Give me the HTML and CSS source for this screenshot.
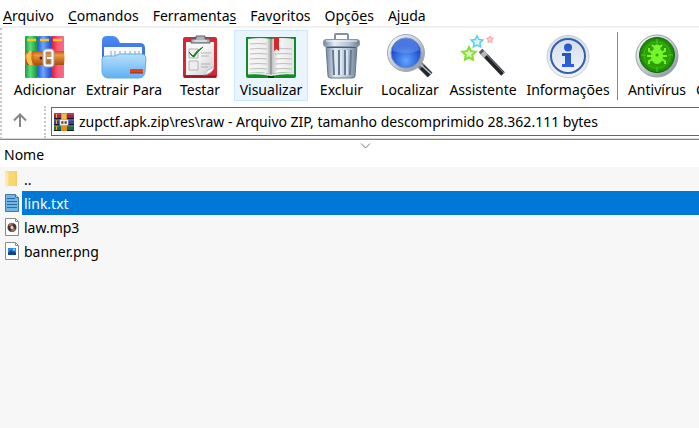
FILE: index.html
```html
<!DOCTYPE html>
<html lang="pt-BR">
<head>
<meta charset="utf-8">
<title>zupctf.apk.zip</title>
<link rel="stylesheet" href="styles.css">
</head>
<body>
<svg class="defs" aria-hidden="true">
  <defs>
    <linearGradient id="green"><stop offset="0" stop-color="#169a3e"/><stop offset=".4" stop-color="#5fdc7c"/><stop offset="1" stop-color="#0d8a33"/></linearGradient>
    <linearGradient id="blue"><stop offset="0" stop-color="#2460d8"/><stop offset=".4" stop-color="#6fa4ff"/><stop offset="1" stop-color="#1a4fd0"/></linearGradient>
    <linearGradient id="red"><stop offset="0" stop-color="#d3143c"/><stop offset=".5" stop-color="#ff5873"/><stop offset="1" stop-color="#ef6f92"/></linearGradient>
    <linearGradient id="belt" x2="0" y2="1"><stop offset="0" stop-color="#b85a10"/><stop offset=".3" stop-color="#f0983a"/><stop offset="1" stop-color="#a84c0c"/></linearGradient>
    <linearGradient id="folderBack" x2="0" y2="1"><stop offset="0" stop-color="#4c8cf5"/><stop offset="1" stop-color="#2f62d8"/></linearGradient>
    <linearGradient id="folderFront" x2="0" y2="1"><stop offset="0" stop-color="#b9e0fb"/><stop offset="1" stop-color="#5fb0f3"/></linearGradient>
    <linearGradient id="steel"><stop offset="0" stop-color="#71869d"/><stop offset=".3" stop-color="#e3ebf3"/><stop offset=".7" stop-color="#b3c2d2"/><stop offset="1" stop-color="#6b7f96"/></linearGradient>
    <linearGradient id="ring" x2="1" y2="1"><stop offset="0" stop-color="#fff"/><stop offset=".5" stop-color="#c4cad2"/><stop offset="1" stop-color="#848b95"/></linearGradient>
    <radialGradient id="lens" cy=".75"><stop offset="0" stop-color="#62a6ff"/><stop offset="1" stop-color="#2052d0"/></radialGradient>
    <linearGradient id="page"><stop offset="0" stop-color="#f8f8f8"/><stop offset=".8" stop-color="#eee"/><stop offset="1" stop-color="#a9a9a9"/></linearGradient>
    <linearGradient id="page2"><stop offset="0" stop-color="#b9b9b9"/><stop offset=".3" stop-color="#f8f8f8"/><stop offset="1" stop-color="#e4e4e4"/></linearGradient>
    <linearGradient id="paper" x2="1" y2="1"><stop offset=".4" stop-color="#f8f8f8"/><stop offset="1" stop-color="#c9cccf"/></linearGradient>
    <linearGradient id="infoFace" x2="0" y2="1"><stop offset="0" stop-color="#d5dde7"/><stop offset="1" stop-color="#f1f4f8"/></linearGradient>
    <linearGradient id="infoMark" x2="0" y2="1"><stop offset="0" stop-color="#2a56b8"/><stop offset="1" stop-color="#2b60ee"/></linearGradient>
    <radialGradient id="radar"><stop offset="0" stop-color="#2fa800"/><stop offset=".8" stop-color="#2a9c06"/><stop offset="1" stop-color="#157d08"/></radialGradient>
    <linearGradient id="yellow"><stop offset="0" stop-color="#fde49a"/><stop offset="1" stop-color="#f6cf62"/></linearGradient>
  </defs>
</svg>

<nav class="menu" aria-label="Menu">
  <a href="#"><u>A</u>rquivo</a>
  <a href="#"><u>C</u>omandos</a>
  <a href="#">Ferramenta<u>s</u></a>
  <a href="#">Fav<u>o</u>ritos</a>
  <a href="#">Opçõ<u>e</u>s</a>
  <a href="#">Aj<u>u</u>da</a>
</nav>

<div class="bars">
<div class="toolbar" role="toolbar">
  <button type="button">
    <svg viewBox="0 0 48 48">
      <rect x="4" y="3" width="13" height="42" rx="1" fill="url(#green)"/><rect x="17" y="3" width="13" height="42" rx="1" fill="url(#blue)"/><rect x="30" y="3" width="13" height="42" rx="1" fill="url(#red)"/>
      <path d="M6 7h9M19 7h9M32 7h9" stroke="#f6c91c" stroke-width="2.500"/>
      <path d="M6 18h37q1 7 0 14H6q-4-7 0-14z" fill="url(#belt)"/>
      <path d="M11 18H8q-5 7 0 14h5q-5-7-2-14z" fill="#f8c04c"/><path d="M12 18v14" stroke="#b8690d"/>
      <circle cx="20" cy="25" r="1.500" fill="#402000"/>
      <rect x="23.500" y="17.500" width="8" height="15" rx="2" fill="none" stroke="#9aa0a8" stroke-width="4"/><rect x="23.500" y="17.500" width="8" height="15" rx="2" fill="none" stroke="#fafafa" stroke-width="2"/>
      <path d="M26 25h6" stroke="#fff" stroke-width="2"/>
    </svg>
    <span>Adicionar</span>
  </button>
  <button type="button">
    <svg viewBox="0 0 48 48">
      <path d="M2 8q0-5 5-5h6q3 0 5 3l2 4h20q5 0 5 5v14H2z" fill="url(#folderBack)"/>
      <path d="M4 14h38v17H4z" fill="#f8fafc"/><path d="M11 18v5M15 18v5M20 18v5M25 18v5M30 18v5M35 18v5M39 18v5" stroke="#b5bdc8" stroke-width="1.500"/>
      <path d="M2 26q0-3 4-3h9l4-2h22q5 0 5 5l-1 13q-1 6-6 6H8q-5 0-6-6z" fill="url(#folderFront)" stroke="#62adf0"/>
      <rect x="30" y="36" width="13" height="4" rx="1" fill="#e4411f"/><path d="M30 40h13" stroke="#a8240e"/>
    </svg>
    <span>Extrair Para</span>
  </button>
  <button type="button">
    <svg viewBox="0 0 48 48">
      <path d="M9 4h30q2 0 2 2v37q0 2-2 2H9q-2 0-2-2V6q0-2 2-2z" fill="#d82732"/><path d="M8 43.500h32" stroke="#9c1620" stroke-width="2"/>
      <path d="M10 9h28v24q-1 8-9 9H10z" fill="url(#paper)"/><path d="M28 42q3-6 10-8-1 6-10 8z" fill="#fff" stroke="#b5b8ba"/>
      <path d="M15 8V6h5V3h9v3h5v4H15z" fill="#aeb5bd" stroke="#59626c"/><path d="M18 8h13" stroke="#fff"/>
      <path d="M13 16h9v9h-9zM13 28h9v9h-9z" fill="#eee" stroke="#b4b4b4"/><path d="M25 20h10M25 23h8M25 31h9M25 34h7" stroke="#b1b1b1"/>
      <path d="M13 19l4 4q4-6 10-9-6 5-9 10-2 0-5-5z" fill="#168326" stroke="#168326"/>
    </svg>
    <span>Testar</span>
  </button>
  <button type="button" class="hot">
    <svg class="wide" viewBox="0 0 56 48">
      <path d="M3 4h50v39q0 2-2 2H5q-2 0-2-2z" fill="#128a27"/><path d="M25 42h6v3h-6z" fill="#063d0c"/>
      <path d="M5 6q13-2 23 0v35q-12-3-23-1z" fill="url(#page)"/><path d="M28 6q12-2 23 0v34q-12-2-23 1z" fill="url(#page2)"/>
      <path d="M5 40.500q12-1 23 1.500 12-2.500 23-1.500" fill="none" stroke="#e4e8e6" stroke-width="2"/>
      <path d="M28 6v36" stroke="#808080"/>
      <path d="M7 11q9-1 17 0M7 16q9-1 17 0M7 21q9-1 17 0M7 26q9-1 17 0M7 31q9-1 17 0M7 36q9-1 17 0M32 16q9-1 17 0M32 21q9-1 17 0M32 26q9-1 17 0M32 31q9-1 17 0M32 36q9-1 17 0" fill="none" stroke="#bcbcbc"/>
      <path d="M31 4h5v14l-2.500-2-2.500 2z" fill="#d9262a"/>
    </svg>
    <span>Visualizar</span>
  </button>
  <button type="button">
    <svg viewBox="0 0 48 48">
      <path d="M17 8V2q0-1 1-1h11q1 0 1 1v6" fill="none" stroke="#8191a4" stroke-width="2"/>
      <path d="M8 13h31l-2 30q0 2-3 2H13q-3 0-3-2z" fill="url(#steel)" stroke="#65788d"/>
      <path d="M15 17l1 25M21 17v25M27 17v25M33 17l-1 25" stroke="#667b93" stroke-width="2"/><path d="M17 17l1 25M23 17v25M29 17v25" stroke="#e4edf5" stroke-width="1.500"/>
      <rect x="5.500" y="6.500" width="36" height="7" rx="2.500" fill="url(#steel)" stroke="#8799ad"/><path d="M8 8h31" stroke="#f3f7fb"/><path d="M9 14.500h29" stroke="#4a5c73"/>
    </svg>
    <span>Excluir</span>
  </button>
  <button type="button">
    <svg viewBox="0 0 48 48">
      <path d="M33 31l11 11" stroke="#777d86" stroke-width="7"/><path d="M36 34l8 8" stroke="#22252b" stroke-width="6"/><path d="M34 31l11 10" stroke="#bfc5ce" stroke-width="1.500"/>
      <circle cx="20" cy="20" r="18.500" fill="url(#ring)" stroke="#a2a9b3"/><circle cx="20" cy="20" r="15" fill="url(#lens)" stroke="#7b8fb8"/>
      <path d="M7 18a13 13 0 0 1 26-1q-10 6-26 1z" fill="#6f9df0" opacity=".5"/>
    </svg>
    <span>Localizar</span>
  </button>
  <button type="button">
    <svg viewBox="0 0 48 48">
      <path d="M23 19l21 22" stroke="#222427" stroke-width="5"/><path d="M25 19l20 21" stroke="#8b9097"/><path d="M22 18l5 5" stroke="#b5babf" stroke-width="5"/><path d="M21.500 17.500l2 2" stroke="#55595d" stroke-width="5"/>
      <path id="star" d="M10 14l2 4.200 4.700.6-3.400 3.200.8 4.700-4.100-2.200-4.100 2.200.8-4.700-3.400-3.200 4.700-.6z" fill="#d5f8a8" stroke="#86de38" stroke-width="2"/>
      <path d="M18 3l1.800 3.600 4 .5-2.900 2.800.7 4-3.600-1.900-3.600 1.900.7-4-2.900-2.800 4-.5z" fill="#d6f6fd" stroke="#58cff0" stroke-width="1.500"/>
      <path d="M31 3l1 2 2.500.3-1.800 1.700.4 2.500-2.100-1.200-2.100 1.200.4-2.500-1.800-1.700 2.500-.3z" fill="#ffd0d0" stroke="#f6a0a2"/>
    </svg>
    <span>Assistente</span>
  </button>
  <button type="button">
    <svg viewBox="0 0 48 48">
      <circle cx="24" cy="23.500" r="21" fill="url(#infoFace)" stroke="#c8cdd3"/><circle cx="24" cy="23" r="17" fill="url(#infoFace)" stroke="#345fae" stroke-width="2"/>
      <circle cx="24" cy="14.500" r="4" fill="url(#infoMark)"/><path d="M18 20h9v11h3v3H18v-3h3v-8h-3z" fill="url(#infoMark)"/>
    </svg>
    <span>Informações</span>
  </button>
  <div class="separator"></div>
  <button type="button">
    <svg viewBox="0 0 48 48">
      <circle cx="24" cy="23" r="21" fill="url(#ring)" stroke="#9aa1a8"/><circle cx="24" cy="22" r="17.500" fill="url(#radar)" stroke="#126b0c"/>
      <g stroke="#4fc42c" fill="none"><circle cx="24" cy="22" r="13" opacity=".5"/><path d="M24 6v5M24 34v5M8 22h5M35 22h5"/></g>
      <g stroke="#75f52b" stroke-width="2" fill="none"><path d="M20 20l-4-2v-3M28 20l4-2v-3M19 23h-5M29 23h5M20 26l-4 2v3M28 26l4 2v3M21 14l-2-2M27 14l2-2"/></g>
      <ellipse cx="24" cy="23" rx="6" ry="8" fill="#75f52b"/><circle cx="24" cy="15" r="3.500" fill="#75f52b"/><circle cx="24" cy="22" r="1.500" fill="#2fa800"/>
    </svg>
    <span>Antivírus</span>
  </button>
  <button type="button" class="cut"><svg viewBox="0 0 48 48"></svg><span>Comentário</span></button>
</div>

<div class="address">
  <button type="button" class="up" aria-label="Acima">
    <svg viewBox="0 0 16 16"><path d="M8 14V2M2 7.500l6-6 6 6" fill="none" stroke="#858585" stroke-width="2"/></svg>
  </button>
  <label class="path">
    <svg viewBox="0 0 20 20">
      <path fill="#a52152" d="M0 1h20v6H0z"/><path fill="#3346a0" d="M0 7h20v6H0z"/><path fill="#13733d" d="M0 13h20v6H0z"/>
      <path d="M0 2h20M0 8h20M0 14h20" stroke="#fff" opacity=".25"/><path d="M0 6.500h20M0 12.500h20M0 18.500h20" stroke="#1a1234"/>
      <path d="M2.500 2v4M2.500 8v4M2.500 14v4" stroke="#e4aa28"/><path fill="#df8c24" d="M7 1h6v18H7z"/><path d="M8 2h4v5H8z" fill="#f4be45"/>
      <rect x="6.500" y="8.500" width="7" height="4" fill="#6b421f" stroke="#f2eee7" stroke-width="1.500"/><path d="M10 8v4" stroke="#fff"/>
    </svg>
    <input type="text" aria-label="Caminho" value="zupctf.apk.zip\res\raw - Arquivo ZIP, tamanho descomprimido 28.362.111 bytes">
  </label>
</div>
</div>

<main class="list">
  <table>
    <thead><tr><th scope="col">Nome<svg class="sort" viewBox="0 0 11 6"><path d="M1 .5l4.500 4.500L10 .5" fill="none" stroke="#777"/></svg></th></tr></thead>
    <tbody>
      <tr><td><div class="file"><svg viewBox="0 0 18 20"><path d="M1 2h12v15H4z" fill="url(#yellow)"/><path d="M5 17V4L2 2h9v15z" fill="#f7d674"/><path d="M1 2l3 2v15l-3-3z" fill="#ffe9a6"/></svg><span>..</span></div></td></tr>
      <tr class="selected"><td><div class="file"><svg viewBox="0 0 18 20"><path d="M1.500 1.500h10l3 3v14h-13z" fill="#70b4e8" stroke="#4178a6"/><path d="M11.500 1.500v3h3" fill="#b9dcf5" stroke="#4178a6"/><path d="M3 5.500h8M3 8.500h10M3 11.500h10M3 14.500h10" stroke="#2c6c9e"/></svg><span>link.txt</span></div></td></tr>
      <tr><td><div class="file"><svg viewBox="0 0 18 20"><path d="M1.500 1.500h10l3 3v14h-13z" fill="#fff" stroke="#8b8b8b"/><path d="M11.500 1.500v3h3" fill="none" stroke="#8b8b8b"/><circle cx="8" cy="10.500" r="4.500" fill="#403642"/><path d="M8 10.500L4 8a4.500 4.500 0 0 1 5-2zM8 10.500l4 2a4.500 4.500 0 0 1-5 2z" fill="#b56548"/><circle cx="8" cy="10.500" r="1.500" fill="#ddd"/></svg><span>law.mp3</span></div></td></tr>
      <tr><td><div class="file"><svg viewBox="0 0 18 20"><path d="M1.500 1.500h10l3 3v14h-13z" fill="#fff" stroke="#8b8b8b"/><path d="M11.500 1.500v3h3" fill="none" stroke="#8b8b8b"/><path d="M4 7h8v7H4z" fill="#238ae6"/><path d="M4 12l3-3 2 2 1-1 2 2v2H4z" fill="#0b438f"/><circle cx="10" cy="8.500" r="1" fill="#a9e1ff"/></svg><span>banner.png</span></div></td></tr>
    </tbody>
  </table>
</main>
</body>
</html>
```
FILE: styles.css
```css
* { box-sizing: border-box; }

html, body { min-height: 100%; }

body {
  margin: 0;
  overflow: hidden;
  background: #f7f7f7;
  color: #000;
  font: 14px/20px "Noto Sans", "Open Sans", sans-serif;
}

button, input { font: inherit; color: inherit; }

svg { display: block; flex: none; }

.defs { position: absolute; width: 0; height: 0; }

.menu {
  display: flex;
  gap: 14px;
  height: 28px;
  padding: 6px 3px 0;
  background: #fff;
  border-bottom: 2px solid #f0f0f0;
}

.menu a { color: inherit; text-decoration: none; }

.menu u { text-underline-offset: 2px; }

.bars {
  background: #fff;
  border-left: 2px dotted #c8c8c8;
  border-bottom: 1px solid #d8d8d8;
}

.toolbar {
  display: grid;
  grid-template-columns: 74px 84px 68px 74px 67px 70px 76px 94px 8px 68px 90px;
  padding: 2px 0 5px 6px;
  overflow: hidden;
}

.toolbar button {
  display: flex;
  flex-direction: column;
  align-items: center;
  height: 71px;
  padding: 2px 0 0;
  background: none;
  border: 1px solid transparent;
  white-space: nowrap;
}

.toolbar button.hot { background: #e8f4fe; border-color: #cde8fc; }

.toolbar button.cut { align-items: flex-start; padding-left: 4px; }

.toolbar svg { width: 48px; height: 48px; }

.toolbar svg.wide { width: 56px; }

.toolbar span { margin-top: -1px; }

.separator {
  width: 1px;
  height: 68px;
  margin: 2px 0 0 2px;
  background: #888;
}

.address { display: flex; height: 32px; }

.up {
  width: 44px;
  padding: 0 0 3px 10px;
  background: none;
  border: 0;
  border-right: 2px dotted #c8c8c8;
}

.up svg { width: 16px; height: 16px; }

.path {
  display: flex;
  flex: 1;
  align-items: center;
  gap: 5px;
  height: 29px;
  margin: 1px 0 0 5px;
  padding-left: 2px;
  border: 1px solid #666;
  border-right: 0;
}

.path svg { width: 20px; height: 20px; }

.path input {
  flex: 1;
  min-width: 0;
  padding: 0;
  background: none;
  border: 0;
  outline: 0;
}

.list { border-top: 1px solid #828790; }

table { width: 100%; border-collapse: collapse; }

th {
  position: relative;
  height: 27px;
  padding: 2px 4px 0;
  background: #fff;
  font-weight: 400;
  text-align: left;
}

.sort {
  position: absolute;
  top: 3px;
  left: 360px;
  width: 11px;
  height: 6px;
}

td { padding: 0; }

.file { display: flex; align-items: center; height: 24px; padding-left: 4px; }

.file svg { width: 18px; height: 20px; }

.file span { flex: 1; padding: 3px 2px 1px; }

.selected span { background: #0078d7; color: #fff; }
```
